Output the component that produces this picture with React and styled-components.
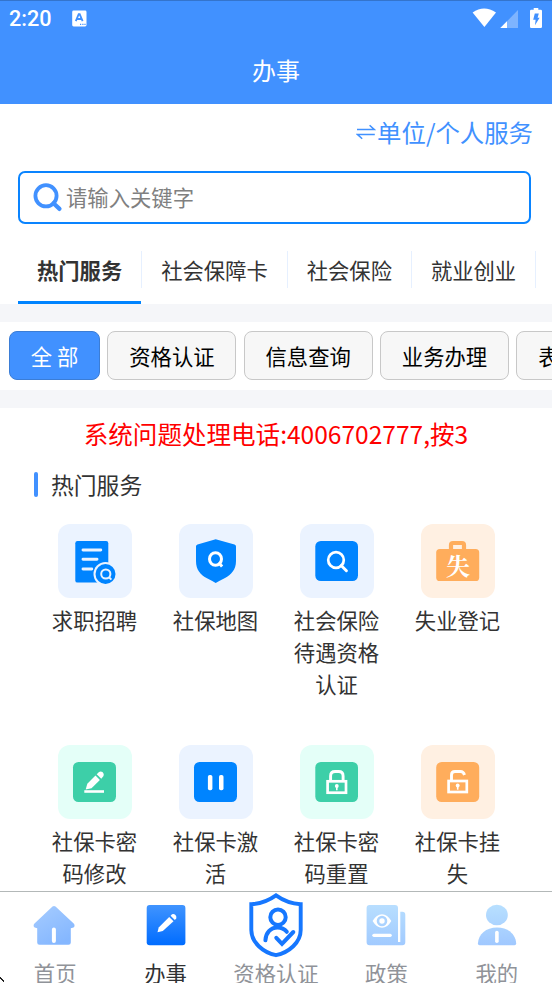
import React from "react";
import styled, { createGlobalStyle, css } from "styled-components";

const categories = ["热门服务", "社会保障卡", "社会保险", "就业创业"];

const filters = ["全 部", "资格认证", "信息查询", "业务办理", "表格下载"];

const services = [
  { name: "求职招聘", tint: "#ebf3ff", icon: <JobIcon /> },
  { name: "社保地图", tint: "#ebf3ff", icon: <MapIcon /> },
  { name: "社会保险待遇资格认证", tint: "#ebf3ff", icon: <CertifyIcon /> },
  { name: "失业登记", tint: "#fff0e2", icon: <UnemployedIcon /> },
  { name: "社保卡密码修改", tint: "#e4fff8", icon: <EditIcon /> },
  { name: "社保卡激活", tint: "#ebf3ff", icon: <ActivateIcon /> },
  { name: "社保卡密码重置", tint: "#e4fff8", icon: <LockIcon /> },
  { name: "社保卡挂失", tint: "#fff0e2", icon: <UnlockIcon /> },
];

const navItems = [
  { name: "首页", icon: <HomeIcon /> },
  { name: "办事", icon: <WorkIcon />, active: true },
  { name: "资格认证", icon: <ShieldUserIcon /> },
  { name: "政策", icon: <PolicyIcon /> },
  { name: "我的", icon: <MineIcon /> },
];

export default function App() {
  return (
    <Page>
      <GlobalStyle />
      <Header>
        <StatusBar>
          <Clock>2:20</Clock>
          <KeyboardIcon />
          <Spacer />
          <StatusIcons />
        </StatusBar>
        <Title>办事</Title>
      </Header>

      <SwitchRow>
        <SwapIcon />
        单位/个人服务
      </SwitchRow>

      <SearchBox>
        <SearchIcon />
        <SearchInput placeholder="请输入关键字" />
      </SearchBox>

      <Tabs>
        {categories.map((name, i) => (
          <Tab key={name} $active={i === 0}>
            <TabText>{name}</TabText>
          </Tab>
        ))}
      </Tabs>

      <Divider />
      <Filters>
        {filters.map((name, i) => (
          <Filter key={name} $active={i === 0}>
            {name}
          </Filter>
        ))}
      </Filters>
      <Divider />

      <Content>
        <Notice>系统问题处理电话:4006702777,按3</Notice>
        <SectionTitle>热门服务</SectionTitle>
        <ServiceGrid>
          {services.map(({ name, tint, icon }) => (
            <Service key={name}>
              <Tile $tint={tint}>{icon}</Tile>
              <ServiceName>{name}</ServiceName>
            </Service>
          ))}
        </ServiceGrid>
      </Content>

      <BottomNav>
        {navItems.map(({ name, icon, active }) => (
          <NavItem key={name} $active={active}>
            {icon}
            <NavText>{name}</NavText>
          </NavItem>
        ))}
      </BottomNav>
      <Pointer viewBox="0 0 5 6">
        <path d="M0 0h1v1h1v1h1v1h1v2h-1v-1h-1v-1h-1v-1h-1z" fill="#222" />
      </Pointer>
    </Page>
  );
}

function KeyboardIcon() {
  return (
    <svg width="15" height="17" viewBox="0 0 15 17">
      <rect x="0.2" y="0.5" width="14.3" height="16" rx="1.4" fill="#fff" />
      <path
        d="M3.8 11.2 6.7 4.2h1L10.6 11.2M5 9h4.4"
        fill="none"
        stroke="#4191ff"
        strokeWidth="1.8"
      />
      <path d="M8 14.3h1.2M10.3 14.3h1.2M12.4 14.3h1.2" stroke="#4191ff" strokeWidth="1.2" />
    </svg>
  );
}

function StatusIcons() {
  return (
    <svg width="72" height="24" viewBox="0 0 72 24">
      <path d="M0.6 6.6Q12 -1.4 24 6.6L12.4 21Z" fill="#fff" />
      <path d="M46 4v18H28.3Z" fill="#fff" opacity="0.32" />
      <path d="M35 15.2V22H28.3Z" fill="#fff" />
      <path
        d="M61.7 2h4.6v1.8h2.4a1.3 1.3 0 0 1 1.3 1.3v15.6a1.3 1.3 0 0 1-1.3 1.3h-9.4a1.3 1.3 0 0 1-1.3-1.3V5.1a1.3 1.3 0 0 1 1.3-1.3h2.4z"
        fill="#fff"
      />
      <path d="M62.8 7.4h4l-1.2 4.4h2l-4.6 7.4.6-5.4h-2.4z" fill="#4191ff" />
    </svg>
  );
}

function SwapIcon() {
  return (
    <svg width="20" height="16" viewBox="0 0 20 16">
      <path
        d="M1 5.6h17.4L13.6 1.3M18.8 10.4H1.4l4.8 4.3"
        fill="none"
        stroke="#4191ff"
        strokeWidth="1.5"
      />
    </svg>
  );
}

function SearchIcon() {
  return (
    <svg width="30" height="30" viewBox="0 0 30 30">
      <circle cx="13" cy="12.8" r="10.6" fill="none" stroke="#4191ff" strokeWidth="3.8" />
      <path d="m20.5 20.3 6 5.6" stroke="#4191ff" strokeWidth="4.2" strokeLinecap="round" />
    </svg>
  );
}

function JobIcon() {
  return (
    <svg viewBox="0 0 74 74">
      <rect x="17.3" y="17" width="33" height="41.6" rx="2.2" fill="#0084ff" />
      <path
        d="M25 26h17.8M25 35.3h14M25 45h8.8"
        stroke="#ebf3ff"
        strokeWidth="2.9"
        strokeLinecap="round"
      />
      <circle cx="47.5" cy="50" r="12" fill="#ebf3ff" />
      <circle cx="47.5" cy="50" r="10" fill="#0084ff" />
      <circle cx="47.8" cy="50" r="4.6" fill="none" stroke="#ebf3ff" strokeWidth="2" />
      <path d="m50.8 53 2.6 2.6" stroke="#ebf3ff" strokeWidth="2" />
    </svg>
  );
}

function MapIcon() {
  return (
    <svg viewBox="0 0 74 74">
      <path
        d="M36.7 15.2 55.5 20.6Q57 21 57 22.5V37C57 46 52 50.5 46 54Q41 56.5 36.7 59 32.5 56.5 27.5 54C21.5 50.5 17 46 17 37V22.5Q17 21 18.5 20.6Z"
        fill="#0084ff"
      />
      <ellipse cx="36.5" cy="35" rx="6" ry="6.3" fill="none" stroke="#fff" strokeWidth="3" />
      <path d="m39.5 38.5 3.6 4" stroke="#fff" strokeWidth="3" />
    </svg>
  );
}

function CertifyIcon() {
  return (
    <svg viewBox="0 0 74 74">
      <rect x="15.3" y="17" width="42.7" height="40" rx="5.5" fill="#0084ff" />
      <circle cx="36" cy="36" r="7.8" fill="none" stroke="#fff" strokeWidth="2.7" />
      <path d="m41.2 41.5 5.2 5.2" stroke="#fff" strokeWidth="3" strokeLinecap="round" />
    </svg>
  );
}

function UnemployedIcon() {
  return (
    <svg viewBox="0 0 74 74">
      <path
        d="M30 27v-6q0-2 2-2h9q2 0 2 2v6"
        fill="none"
        stroke="#ffad5c"
        strokeWidth="4.2"
      />
      <rect x="15.2" y="25" width="43" height="32" rx="3.6" fill="#ffad5c" />
      <IconText x="37" y="50.5">
        失
      </IconText>
    </svg>
  );
}

function EditIcon() {
  return (
    <svg viewBox="0 0 74 74">
      <rect x="15" y="17" width="43" height="40" rx="5.5" fill="#3dcfa8" />
      <path d="M27.7 44.5 29.3 38.8 37.5 30.5 41.9 34.9 33.5 43.2Z" fill="#fff" />
      <path d="M38.7 29.3 41 27q1.5-1 3.5 0 2 2 1 4l-2.2 2.7Z" fill="#fff" />
      <path d="M26.3 46.5H46" stroke="#fff" strokeWidth="2.6" />
    </svg>
  );
}

function ActivateIcon() {
  return (
    <svg viewBox="0 0 74 74">
      <rect x="15" y="17" width="43" height="40" rx="5.5" fill="#0084ff" />
      <rect x="28.9" y="30" width="4.5" height="15.3" rx="1.8" fill="#fff" />
      <rect x="40" y="30" width="4.5" height="15.3" rx="1.8" fill="#fff" />
    </svg>
  );
}

function LockIcon() {
  return (
    <svg viewBox="0 0 74 74">
      <rect x="15.3" y="17" width="42.7" height="40" rx="5.5" fill="#3dcfa8" />
      <g fill="none" stroke="#fff">
        <rect x="27.6" y="36.3" width="18.4" height="11.4" strokeWidth="2.7" />
        <path d="M30.6 36v-5q0-4.5 4.5-4.5h3.5q4.5 0 4.5 4.5v5" strokeWidth="2.9" />
      </g>
      <circle cx="36.8" cy="41" r="1.9" fill="#fff" />
      <path d="M36.8 41v4.2" stroke="#fff" strokeWidth="1.6" />
    </svg>
  );
}

function UnlockIcon() {
  return (
    <svg viewBox="0 0 74 74">
      <rect x="15.2" y="17" width="43" height="40" rx="5.5" fill="#ffad5c" />
      <g fill="none" stroke="#fff">
        <rect x="27.6" y="36" width="18.2" height="11" strokeWidth="2.7" />
        <path d="M30.5 36v-6q0-3.5 3.5-3.5h5.5q3 0 4 3.5" strokeWidth="2.9" />
      </g>
      <circle cx="36.7" cy="40.5" r="1.9" fill="#fff" />
      <path d="M36.7 40.5v4.2" stroke="#fff" strokeWidth="1.6" />
    </svg>
  );
}

function HomeIcon() {
  return (
    <svg viewBox="0 0 60 66">
      <defs>
        <linearGradient id="home" x1="0" y1="0" x2="0.6" y2="1">
          <stop offset="0" stopColor="#a6ccff" />
          <stop offset="1" stopColor="#85b7ff" />
        </linearGradient>
      </defs>
      <path
        d="M27.5 14.6Q29 13.4 30.5 14.6L48.7 31.5Q50.5 33.8 48.5 35.6L45.8 36.3V50.5Q45.8 52.8 43.5 52.8H14.5Q12.2 52.8 12.2 50.5V36.3L9.7 35.6Q7.6 33.8 9.5 31.5Z"
        fill="url(#home)"
      />
      <path d="M28.9 37.5V49" stroke="#fff" strokeWidth="4" strokeLinecap="round" />
    </svg>
  );
}

function WorkIcon() {
  return (
    <svg viewBox="0 0 60 66">
      <defs>
        <linearGradient id="work" x1="0" y1="0" x2="0" y2="1">
          <stop offset="0" stopColor="#4094ff" />
          <stop offset="1" stopColor="#006cff" />
        </linearGradient>
      </defs>
      <rect x="10.7" y="13" width="38.7" height="40.3" rx="3" fill="url(#work)" />
      <path d="M21.5 40.2 22.7 35.5 33.2 25 37.5 29.2 26.8 39Z" fill="#fff" />
      <path d="M34.6 23.7 36 22.3q1.7-.9 3.5.7 1.4 1.7.7 3.5l-1.4 1.4Z" fill="#fff" />
    </svg>
  );
}

function ShieldUserIcon() {
  return (
    <svg viewBox="0 0 60 66" fill="none" stroke="#1677ff">
      <path
        d="M30 3.4C22.5 8.8 15 11.7 5.3 12.2V38C5.3 50.5 17 60.5 30 63.2 43 60.5 54.7 50.5 54.7 38V12.2C45 11.7 37.5 8.8 30 3.4Z"
        strokeWidth="3.9"
      />
      <circle cx="32" cy="25.2" r="7.7" strokeWidth="4" />
      <path
        d="M19.4 48.3C19.7 41 24.5 35.5 31.5 35.5 35.5 35.5 38.5 37 40.8 39.8"
        strokeWidth="4"
        strokeLinecap="round"
      />
      <path d="m30.3 45.8 5.7 6L47.3 40" strokeWidth="4" strokeLinecap="round" />
    </svg>
  );
}

function PolicyIcon() {
  return (
    <svg viewBox="0 0 60 66">
      <defs>
        <linearGradient id="policy" x1="0" y1="13" x2="0" y2="53" gradientUnits="userSpaceOnUse">
          <stop offset="0" stopColor="#b8deff" />
          <stop offset="1" stopColor="#a1caff" />
        </linearGradient>
      </defs>
      <path
        d="M13.6 13H39q3 0 3 3v34h2.3V19.7h2q3 0 3 3V50.2q0 3-3 3H13.6q-3 0-3-3V16q0-3 3-3z"
        fill="url(#policy)"
      />
      <path d="M16.6 29Q20.5 22.2 26 22.2T35.3 29Q31.5 35.8 26 35.8T16.6 29Z" fill="#fff" />
      <circle cx="26" cy="29" r="4" fill="#fff" stroke="#abd3ff" strokeWidth="2.6" />
      <path d="M17.9 43.3H34.2" stroke="#fff" strokeWidth="3.2" strokeLinecap="round" />
    </svg>
  );
}

function MineIcon() {
  return (
    <svg viewBox="0 0 60 66">
      <defs>
        <linearGradient id="mine" x1="0" y1="12" x2="0" y2="53" gradientUnits="userSpaceOnUse">
          <stop offset="0" stopColor="#b8e0ff" />
          <stop offset="1" stopColor="#a0c8ff" />
        </linearGradient>
      </defs>
      <ellipse cx="29.9" cy="23" rx="10.9" ry="10.3" fill="url(#mine)" />
      <path
        d="M10.9 51.5C11.5 42 19 35.6 30 35.6S48.6 42 49.2 51.5Q49.2 53.2 47.5 53.2H12.6Q10.9 53.2 10.9 51.5Z"
        fill="url(#mine)"
      />
      <path d="M29.9 40.5V49.3" stroke="#fff" strokeWidth="3.6" strokeLinecap="round" />
    </svg>
  );
}

const GlobalStyle = createGlobalStyle`
  * {
    box-sizing: border-box;
  }

  body {
    margin: 0;
    font-family: "Noto Sans CJK SC", sans-serif;
    font-size: 21.33px;
    color: #333;
    background-color: white;
  }

  svg {
    display: block;
    flex-shrink: 0;
  }
`;

const Page = styled.div`
  position: relative;
  display: flex;
  flex-direction: column;
  width: 552px;
  height: 983px;
  overflow: hidden;
  background-color: white;
`;

const Header = styled.div`
  flex-shrink: 0;
  height: 104px;
  color: white;
  background-color: #4191ff;
  border-top: 1px solid #3474cc;
`;

const StatusBar = styled.div`
  display: flex;
  align-items: center;
  height: 34px;
  padding: 0 8px 0 9px;
`;

const Clock = styled.div`
  width: 63px;
  padding-top: 1px;
  font-family: Roboto, sans-serif;
  font-size: 21.6px;
  font-weight: 500;
`;

const Spacer = styled.div`
  flex: 1;
`;

const Title = styled.div`
  font-size: 24px;
  line-height: 69px;
  text-align: center;
`;

const SwitchRow = styled.div`
  display: flex;
  flex-shrink: 0;
  align-items: center;
  justify-content: flex-end;
  gap: 1px;
  height: 55px;
  padding-right: 19px;
  font-size: 24.4px;
  color: #4191ff;
`;

const SearchBox = styled.div`
  display: flex;
  flex-shrink: 0;
  align-items: center;
  gap: 3px;
  height: 53px;
  margin: 12px 21px 0 18px;
  padding-left: 13px;
  border: 2px solid #0a84ff;
  border-radius: 7px;
`;

const SearchInput = styled.input`
  flex: 1;
  min-width: 0;
  padding: 0 0 2px;
  font: inherit;
  background: none;
  border: none;
  outline: none;

  &::placeholder {
    color: #808080;
  }
`;

const Tabs = styled.div`
  display: flex;
  flex-shrink: 0;
  height: 80px;
  padding: 13px 0 0 18px;
  overflow: hidden;
`;

const Tab = styled.div`
  display: flex;
  flex-direction: column;
  flex-shrink: 0;
  padding-top: 14px;

  ${({ $active }) =>
    $active &&
    css`
      font-weight: bold;
      background: linear-gradient(#0084ff, #0084ff) 0 100% / 123px 3px no-repeat;
    `}
`;

const TabText = styled.div`
  padding: 0 18.95px;
  line-height: 37px;
  border-right: 1.5px solid #e6f0ff;
`;

const Divider = styled.div`
  flex-shrink: 0;
  height: 18px;
  background-color: #f5f6f9;
`;

const Filters = styled.div`
  display: flex;
  flex-shrink: 0;
  gap: 7.4px;
  height: 68px;
  padding: 9px 0 10px 9px;
  overflow: hidden;
`;

const Filter = styled.div`
  flex-shrink: 0;
  padding: 0 20.8px;
  line-height: 48px;
  white-space: nowrap;
  color: ${({ $active }) => ($active ? "white" : "black")};
  background-color: ${({ $active }) => ($active ? "#4191ff" : "#f7f7f7")};
  border: 1px solid ${({ $active }) => ($active ? "#3b7dd6" : "#c8c8c8")};
  border-radius: 8px;
`;

const Content = styled.div`
  flex: 1;
  min-height: 0;
  overflow: hidden;
`;

const Notice = styled.div`
  height: 53px;
  font-size: 24.55px;
  line-height: 51px;
  text-align: center;
  color: red;
`;

const SectionTitle = styled.div`
  display: flex;
  align-items: center;
  gap: 13px;
  height: 47px;
  padding-left: 34px;
  font-size: 22.8px;

  &::before {
    content: "";
    width: 4px;
    height: 25px;
    background-color: #4191ff;
    border-radius: 2px;
  }
`;

const ServiceGrid = styled.div`
  display: grid;
  grid-template-columns: repeat(4, 121px);
  grid-template-rows: 221px 221px;
  padding: 16px 34px 0;
`;

const Service = styled.div`
  display: flex;
  flex-direction: column;
  align-items: center;
  gap: 6px;
`;

const Tile = styled.div`
  width: 74px;
  height: 74px;
  background-color: ${({ $tint }) => $tint};
  border-radius: 12px;
`;

const ServiceName = styled.div`
  width: 90px;
  line-height: 31.8px;
  text-align: center;
`;

const IconText = styled.text`
  font-family: "Noto Serif CJK SC", "Noto Sans CJK SC", serif;
  font-size: 24px;
  font-weight: bold;
  text-anchor: middle;
  fill: white;
`;

const BottomNav = styled.div`
  display: grid;
  grid-template-columns: repeat(5, 1fr);
  flex-shrink: 0;
  height: 92px;
  background-color: white;
  border-top: 1px solid #b3b8b8;
`;

const NavItem = styled.div`
  display: flex;
  flex-direction: column;
  align-items: center;
  color: ${({ $active }) => ($active ? "#303133" : "#909399")};

  svg {
    width: 60px;
    height: 66px;
  }
`;

const NavText = styled.div`
  line-height: 30px;
`;

const Pointer = styled.svg`
  position: absolute;
  bottom: 0;
  left: 0;
  width: 5px;
  height: 6px;
`;
